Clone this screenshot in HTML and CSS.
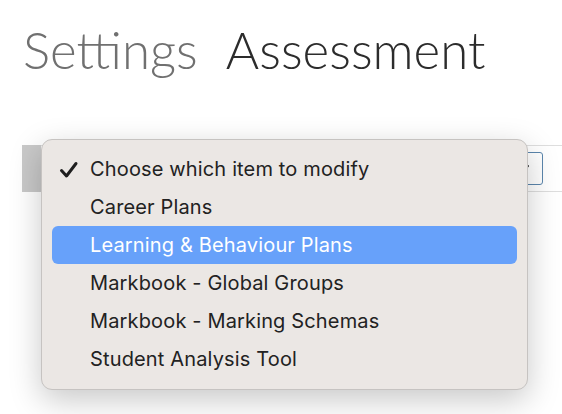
FILE: index.html
```html
<!DOCTYPE html>
<html lang="en">
  <head>
    <meta charset="UTF-8" />
    <meta name="viewport" content="width=device-width, initial-scale=1.0" />
    <title>Settings - Assessment</title>
    <link rel="stylesheet" href="styles.css">
  </head>
  <body>
    <h1 class="page-title">
      <span class="crumb">Settings</span>
      <span class="current">Assessment</span>
    </h1>

    <div class="picker-row">
      <div class="row-handle"></div>
      <div class="row-body">
        <div class="select-box">
          <svg width="16" height="16" viewBox="0 0 16 16">
            <path d="M2 5 L8 11 L14 5" fill="none" stroke="#333" stroke-width="2" stroke-linecap="round" />
          </svg>
        </div>
      </div>

      <!-- Open option list of the select -->
      <ul class="menu">
        <li class="menu-item checked">
          <span class="tick">
            <svg width="20" height="18" viewBox="0 0 20 18">
              <path d="M2.5 9.5 L7.5 15 L17 2.5" fill="none" stroke="#1e1e1e" stroke-width="3" stroke-linecap="round" stroke-linejoin="round" />
            </svg>
          </span>
          Choose which item to modify
        </li>
        <li class="menu-item">Career Plans</li>
        <li class="menu-item active">Learning &amp; Behaviour Plans</li>
        <li class="menu-item">Markbook - Global Groups</li>
        <li class="menu-item">Markbook - Marking Schemas</li>
        <li class="menu-item">Student Analysis Tool</li>
      </ul>
    </div>
  </body>
</html>
```

FILE: styles.css
```css
/* Global Styles */
html,
body {
  min-height: 414px;
}

body {
  margin: 0;
  background-color: #fff;
  font-family: "Liberation Sans", Arial, sans-serif;
}

/* Page heading */
.page-title {
  margin: 0;
  padding: 18px 0 0 23px;
  font-family: Lato, "Open Sans", sans-serif;
  font-weight: 300;
  font-size: 51px;
  line-height: 64px;
  white-space: nowrap;
}

.crumb {
  color: #707070;
  margin-right: 16px;
}

.current {
  color: #2c2c2c;
}

/* Row holding the select */
.picker-row {
  position: relative;
  display: flex;
  margin-top: 63px;
  padding-left: 22px;
}

.row-handle {
  width: 19px;
  height: 47px;
  background-color: #c9c9c9;
}

.row-body {
  flex: 1;
  height: 45px;
  border-top: 1px solid #dedede;
  border-bottom: 1px solid #dedede;
  display: flex;
  justify-content: flex-end;
  align-items: center;
  padding-right: 19px;
}

.select-box {
  width: 40px;
  height: 31px;
  border: 1px solid #5b86ad;
  border-radius: 3px;
  display: flex;
  align-items: center;
  justify-content: center;
}

/* Dropdown menu */
.menu {
  position: absolute;
  left: 41px;
  top: -6px;
  width: 465px;
  margin: 0;
  padding: 10px 10px 11px;
  list-style: none;
  background-color: #ebe7e4;
  border: 1px solid #c6c3c1;
  border-radius: 11px;
  box-shadow: 0 10px 32px rgba(0, 0, 0, 0.22);
}

.menu-item {
  position: relative;
  height: 38px;
  line-height: 38px;
  padding-left: 38px;
  border-radius: 6px;
  font-family: Inter, "Liberation Sans", sans-serif;
  font-size: 20px;
  letter-spacing: 0.15px;
  color: #222;
}

.menu-item.active {
  background-color: #67a1fa;
  color: #fff;
}

.tick {
  position: absolute;
  left: 7px;
  top: 11px;
  line-height: 0;
}
```
